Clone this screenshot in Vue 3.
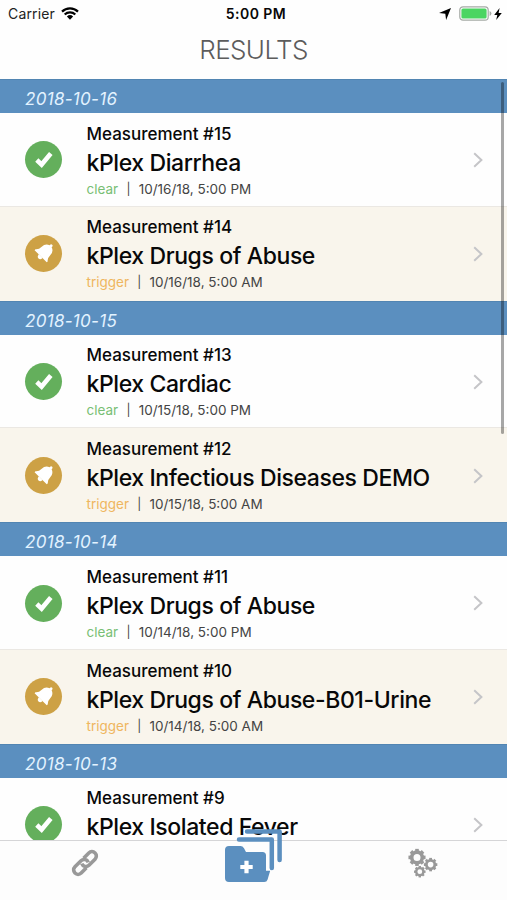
<template>
  <div class="screen">
    <header class="top">
      <div class="status-bar">
        <div class="status-left">
          <span class="carrier">Carrier</span>
          <svg class="wifi" viewBox="0 0 18 13">
            <path d="M1 4.6a11.4 11.4 0 0 1 16 0" />
            <path d="M3.7 7.5a7.6 7.6 0 0 1 10.6 0" />
            <path class="wifi-dot" d="M5.9 9.5a4.5 4.5 0 0 1 6.2 0L9 12.7z" />
          </svg>
        </div>
        <span class="clock">5:00 PM</span>
        <div class="status-right">
          <svg class="location" viewBox="0 0 12 12">
            <path d="M12 0 7.1 12 6.3 5.8 0 5z" />
          </svg>
          <svg class="battery" viewBox="0 0 33 15">
            <rect class="battery-case" x="0.8" y="0.8" width="28.4" height="13.4" rx="3.2" />
            <rect class="battery-level" x="2.4" y="2.4" width="25.2" height="10.2" rx="1.6" />
            <path class="battery-cap" d="M30.6 5v5q1.8-.8 1.8-2.5T30.6 5z" />
          </svg>
          <svg class="bolt" viewBox="0 0 8 12">
            <path d="M5.6 0 .2 7h3.1L2.2 12 7.8 4.9H4.6z" />
          </svg>
        </div>
      </div>
      <h1 class="title">RESULTS</h1>
    </header>

    <main class="list">
      <section v-for="group in groups" :key="group.date" class="group">
        <h2 class="date">{{ group.date }}</h2>
        <article
          v-for="item in group.items"
          :key="item.id"
          class="row"
          :class="`row--${item.status}`"
        >
          <svg class="badge" viewBox="0 0 37 37">
            <circle cx="18.5" cy="18.5" r="18.5" />
            <path
              v-if="item.status === 'clear'"
              class="check"
              d="M11.8 19 16.6 23.6 25.8 12.6"
            />
            <g v-else class="bell" transform="translate(19.7 17.2) rotate(45)">
              <path
                d="M0-10.6q1.6 0 1.4 2.2Q6-7 6-1.8 6 2.4 8.6 4.4v1.3H-8.6V4.4Q-6 2.4-6-1.8-6-7-1.4-8.4-1.6-10.6 0-10.6z"
              />
              <path d="M-2.6 5.6h5.2Q2.4 8.8 0 8.8T-2.6 5.6z" />
            </g>
          </svg>
          <div class="info">
            <div class="number">Measurement #{{ item.id }}</div>
            <div class="name">{{ item.name }}</div>
            <div v-if="item.time" class="meta">
              <span class="status">{{ item.status }}</span>
              <span class="divider">|</span>
              <span class="time">{{ item.time }}</span>
            </div>
          </div>
          <svg class="chevron" viewBox="0 0 10 16">
            <path d="M1.2 1.2 8.4 8l-7.2 6.8" />
          </svg>
        </article>
      </section>
      <div class="scrollbar"></div>
    </main>

    <nav class="tabs">
      <div class="tab">
        <svg class="link" viewBox="0 0 30 30">
          <g transform="rotate(-45 15 15)">
            <path d="M12.6 19.4H5.2a4.4 4.4 0 0 1 0-8.8h8.6a4.4 4.4 0 0 1 4 6.2" />
            <path d="M17.4 10.6h7.4a4.4 4.4 0 0 1 0 8.8h-8.6a4.4 4.4 0 0 1-4-6.2" />
          </g>
        </svg>
      </div>
      <div class="tab">
        <svg class="folder" viewBox="0 0 58 54">
          <path class="sheet" d="M22 2.4h32.6V31" />
          <path class="sheet" d="M14 10.6h32.8V39" />
          <path
            class="folder-body"
            d="M4 17h11.5q2.2 0 3.5 2.2l2 3.8h16.5q3.5 0 3.5 3.5v15.2h4.2l-2.7 9q-.7 2.3-3.2 2.3H4q-4 0-4-4V21q0-4 4-4z"
          />
          <path class="plus" d="M21.5 31.8v12.4M15.3 38h12.4" />
        </svg>
      </div>
      <div class="tab">
        <svg class="gears" viewBox="0 0 30 30">
          <g v-for="gear in gears" :key="gear.x" :transform="`translate(${gear.x} ${gear.y})`">
            <circle class="gear-ring" :r="gear.r" :stroke-width="gear.w" />
            <path
              v-for="n in 8"
              :key="n"
              class="gear-tooth"
              :stroke-width="gear.w"
              :d="`M0 ${-gear.r}V${-gear.r - gear.w * 0.9}`"
              :transform="`rotate(${n * 45})`"
            />
          </g>
        </svg>
      </div>
    </nav>
  </div>
</template>

<script setup>
const groups = [
  {
    date: '2018-10-16',
    items: [
      { id: 15, name: 'kPlex Diarrhea', status: 'clear', time: '10/16/18, 5:00 PM' },
      { id: 14, name: 'kPlex Drugs of Abuse', status: 'trigger', time: '10/16/18, 5:00 AM' }
    ]
  },
  {
    date: '2018-10-15',
    items: [
      { id: 13, name: 'kPlex Cardiac', status: 'clear', time: '10/15/18, 5:00 PM' },
      { id: 12, name: 'kPlex Infectious Diseases DEMO', status: 'trigger', time: '10/15/18, 5:00 AM' }
    ]
  },
  {
    date: '2018-10-14',
    items: [
      { id: 11, name: 'kPlex Drugs of Abuse', status: 'clear', time: '10/14/18, 5:00 PM' },
      { id: 10, name: 'kPlex Drugs of Abuse-B01-Urine', status: 'trigger', time: '10/14/18, 5:00 AM' }
    ]
  },
  {
    date: '2018-10-13',
    items: [{ id: 9, name: 'kPlex Isolated Fever', status: 'clear' }]
  }
];

const gears = [
  { x: 9, y: 9.4, r: 5.3, w: 3.6 },
  { x: 22.6, y: 16.6, r: 4.2, w: 2.8 },
  { x: 11.8, y: 23.7, r: 3.6, w: 2.4 }
];
</script>

<style>
body {
  margin: 0;
  background: #fff;
}
</style>

<style scoped>
.screen {
  display: flex;
  flex-direction: column;
  width: 507px;
  height: 900px;
  overflow: hidden;
  background: #fefefe;
  color: #080808;
  font-family: Inter, 'Liberation Sans', sans-serif;
}

svg {
  display: block;
  flex: none;
  overflow: visible;
}

.top {
  flex: none;
  height: 79px;
}

.status-bar {
  display: grid;
  grid-template-columns: 1fr auto 1fr;
  align-items: center;
  height: 27px;
  padding: 0 5px 0 8px;
  font-size: 14px;
}

.status-left,
.status-right {
  display: flex;
  align-items: center;
}

.status-left {
  gap: 6px;
}

.status-right {
  justify-content: flex-end;
}

.carrier {
  color: #222;
  letter-spacing: 0.15px;
}

.clock {
  padding-left: 2px;
  font-weight: 600;
  letter-spacing: 0.45px;
}

.wifi {
  width: 18px;
  height: 13px;
  fill: none;
  stroke: #000;
  stroke-width: 2.2;
}

.wifi .wifi-dot {
  fill: #000;
  stroke: none;
}

.location {
  width: 12px;
  height: 12px;
  margin-right: 8px;
}

.battery {
  width: 33px;
  height: 15px;
  margin-right: 2px;
}

.battery-case {
  fill: #fff;
  stroke: #a5aaa5;
  stroke-width: 1.2;
}

.battery-level {
  fill: #4bd562;
}

.battery-cap {
  fill: #a5aaa5;
}

.bolt {
  width: 8px;
  height: 12px;
}

.title {
  margin: 0;
  color: #5c5c5c;
  font-size: 26px;
  font-weight: 300;
  line-height: 46px;
  text-align: center;
  letter-spacing: -0.6px;
}

.list {
  position: relative;
  flex: 1;
  min-height: 0;
  overflow: hidden;
}

.date {
  box-sizing: border-box;
  height: 34px;
  margin: 0;
  padding-left: 25px;
  border-top: 1px solid #5285b2;
  background: #5b8fbf;
  color: #e3f3ff;
  font-size: 17px;
  font-style: italic;
  font-weight: 400;
  line-height: 39px;
  letter-spacing: 0.3px;
}

.row {
  display: flex;
  box-sizing: border-box;
  height: 93.8px;
  padding: 8.7px 24px 0 25px;
  background: #fefefe;
}

.row--clear {
  border-bottom: 1px solid #ebe8e3;
}

.row--trigger {
  background: #f9f5ec;
}

.badge {
  width: 37px;
  height: 37px;
  margin-top: 19.8px;
}

.row--clear .badge {
  fill: #64af5c;
}

.row--trigger .badge {
  fill: #cda145;
}

.badge .check {
  fill: none;
  stroke: #fff;
  stroke-width: 4.6;
}

.badge .bell {
  fill: #fff;
}

.info {
  flex: 1;
  margin-left: 24.5px;
  white-space: nowrap;
}

.number {
  font-size: 17px;
  font-weight: 500;
  line-height: 24px;
}

.name {
  font-size: 23px;
  font-weight: 500;
  line-height: 34px;
  letter-spacing: -0.4px;
}

.meta {
  display: flex;
  color: #444;
  font-size: 13.5px;
  line-height: 18px;
}

.divider {
  width: 20.5px;
  font-size: 12px;
  text-align: center;
}

.row--clear .status {
  color: #79bf75;
}

.row--trigger .status {
  color: #efb65f;
}

.chevron {
  width: 10px;
  height: 16px;
  margin-top: 30.5px;
  fill: none;
  stroke: #c5c5c8;
  stroke-width: 2;
}

.scrollbar {
  position: absolute;
  top: 3px;
  right: 3px;
  width: 3px;
  height: 352px;
  border-radius: 2px;
  background: rgba(0, 0, 0, 0.34);
}

.tabs {
  position: relative;
  display: grid;
  flex: none;
  grid-template-columns: repeat(3, 1fr);
  box-sizing: border-box;
  height: 60px;
  border-top: 1px solid #d5d5d7;
  background: #fdfdfd;
}

.tab {
  display: flex;
  justify-content: center;
  align-items: flex-start;
}

.link {
  width: 30px;
  height: 30px;
  margin-top: 7px;
  fill: none;
  stroke: #999;
  stroke-width: 3.6;
}

.folder {
  width: 58px;
  height: 54px;
  margin-top: -12px;
}

.sheet {
  fill: none;
  stroke: #5b8fbf;
  stroke-width: 4.5;
  stroke-linecap: round;
  stroke-linejoin: round;
}

.folder-body {
  fill: #5b8fbf;
}

.plus {
  stroke: #fff;
  stroke-width: 4.2;
}

.gears {
  width: 30px;
  height: 30px;
  margin-top: 7px;
}

.gear-ring {
  fill: none;
  stroke: #999;
}

.gear-tooth {
  stroke: #999;
}
</style>
